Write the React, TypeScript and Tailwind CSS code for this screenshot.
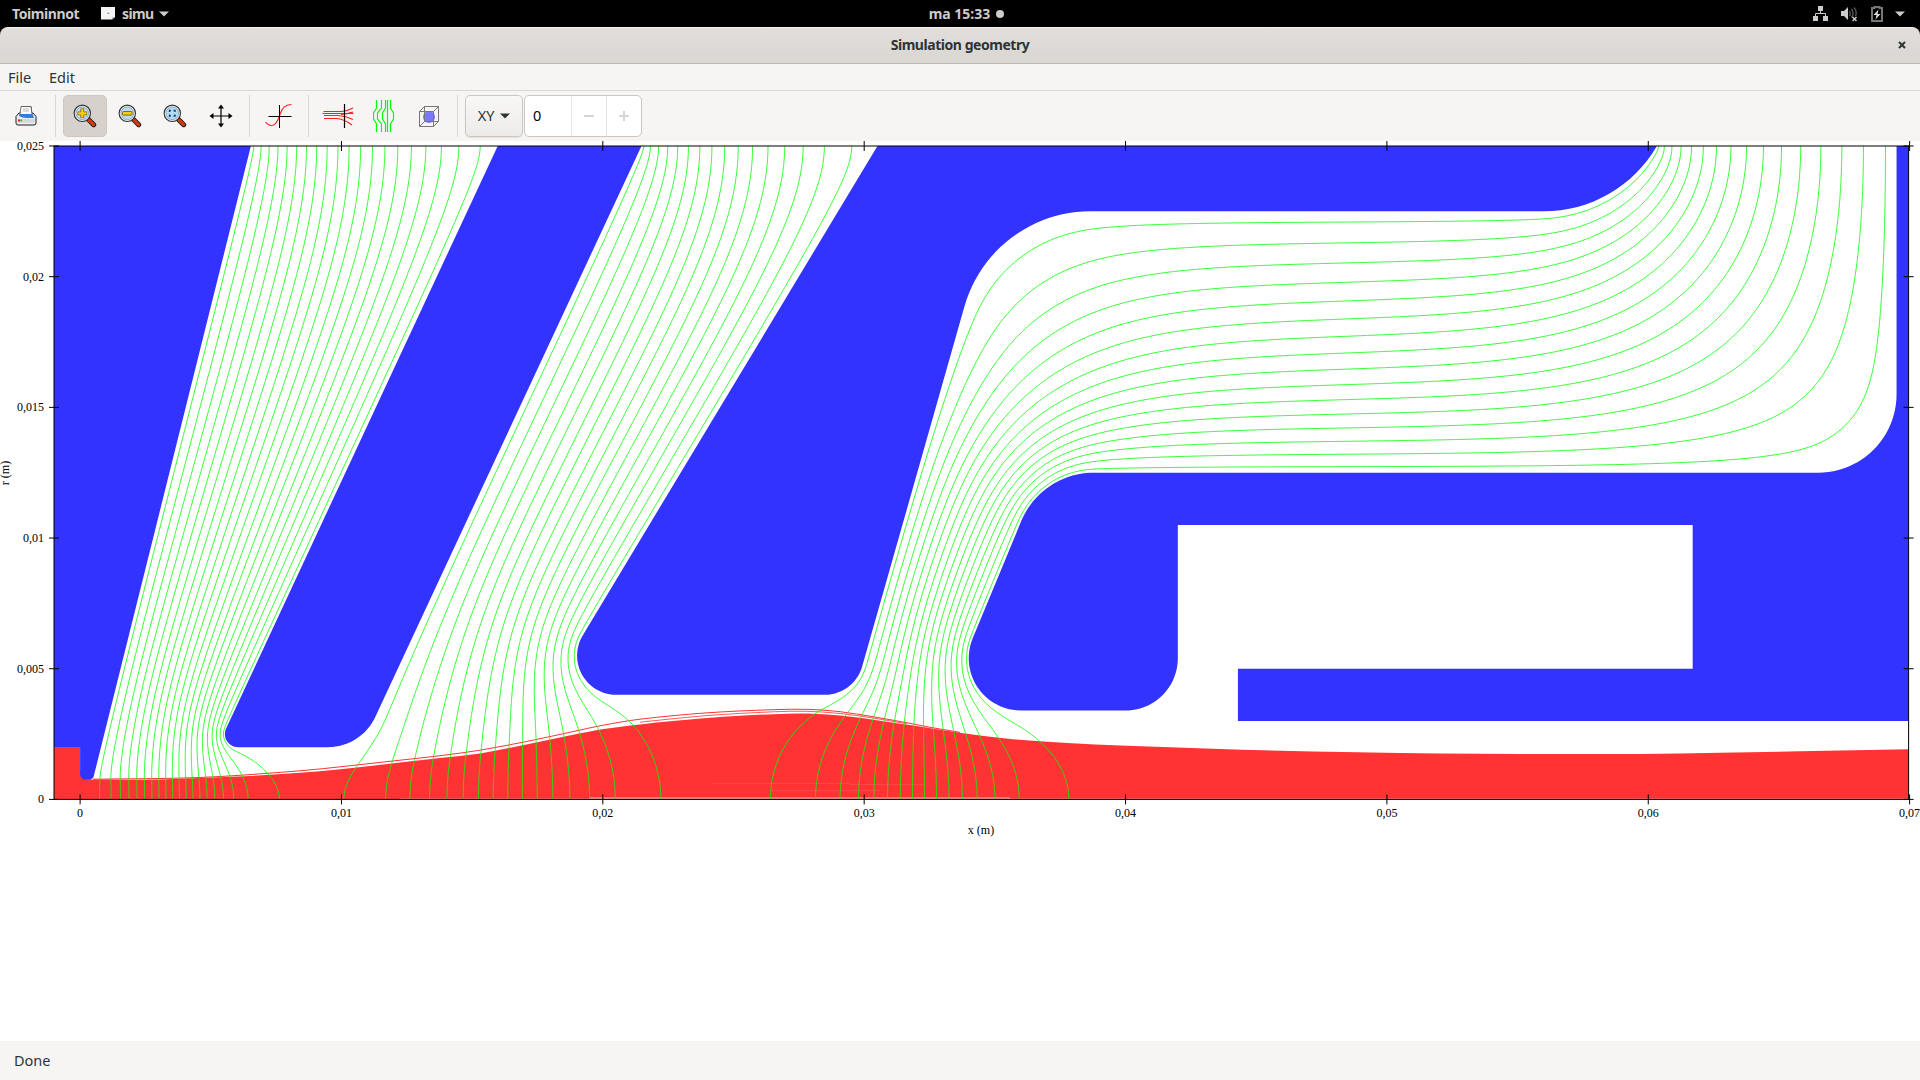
import React from "react";

type Vertex = [number, number, number?];
type Point = [number, number];

/* Plot scale: millimetres to canvas pixels. */
const X0 = 80.1;
const Y0 = 799.4;
const S = 26.136;
const px = (x: number) => X0 + x * S;
const py = (r: number) => Y0 - r * S;

/* Electrode outlines in mm: x, r and an optional fillet radius. */
const ELECTRODES: Vertex[][] = [
  [[-3, 30], [-3, 2], [0, 2], [0, 0.75, 0.22], [0.488, 0.75, 0.2], [7.78, 30]],
  [[18.31, 30], [5.255, 2, 0.5], [10.755, 2, 2], [23.81, 30]],
  [[33.52, 30], [17.86, 4, 1.5], [29.616, 4, 1.5], [34.87, 22.5, 5], [61, 22.5, 5], [61, 30]],
  [[36.776, 12.5, 3], [69.5, 12.5, 3], [69.5, 30], [71, 30], [71, 3], [44.3, 3], [44.3, 5], [61.7, 5], [61.7, 10.5], [42, 10.5], [42, 3.4, 2], [33.007, 3.4, 2]],
];
const PLASMA: Vertex[] = [[-3, 2.2], [-3, -1], [0.15, -1], [0.15, 0.85], [0, 0.85], [0, 2.2]];
/* Potentials of the electrodes and the plasma, in contour steps. */
const VOLTS = [0, 20, 4, 20, 0];

/* Beam envelope in canvas pixels. */
const BEAM: Point[] = [
  [80, 779.8], [93, 779.6], [130, 779.8], [160, 779.4], [200, 778], [250, 776], [300, 772.8], [345, 768.8], [400, 762.6], [440, 757.9], [480, 753.4],
  [530, 743.8], [573, 734.8], [602, 729.2], [640, 724.4], [673, 721], [723, 716.8], [773, 714.2], [807, 713.6], [840, 715.5],
  [867, 718.7], [900, 723.8], [923, 727], [947, 730.8], [980, 735.6], [1013, 739.2], [1063, 742.7], [1127, 745.7], [1213, 748.7],
  [1313, 751.5], [1400, 753], [1440, 753.5], [1520, 754], [1640, 753.9], [1720, 752.8], [1800, 751.3], [1909, 749.3],
];
const HALO: Point[] = [
  [93, 779.2], [200, 777.5], [300, 770.8], [345, 766.3], [400, 760.2], [440, 755.7], [480, 750.2], [530, 740.8], [573, 731.6], [602, 725.4], [640, 719.2],
  [706, 712.9], [773, 709.7], [810, 709.4], [840, 711.7], [873, 716.7], [907, 722.8], [930, 727.3], [960, 732.4],
];
const HALO_INNER: Point[] = [
  [640, 722.2], [706, 715.6], [773, 711.8], [807, 711.3], [840, 713.5], [873, 718], [907, 723.8],
];

const line = (pts: Point[]) => "M" + pts.map(([x, y]) => `${x.toFixed(2)} ${y.toFixed(2)}`).join("L");

function smooth(pts: Point[]): string {
  let s = `M${pts[0][0]} ${pts[0][1]}`;
  for (let i = 0; i < pts.length - 1; i++) {
    const a = pts[Math.max(0, i - 1)], b = pts[i], c = pts[i + 1], d = pts[Math.min(pts.length - 1, i + 2)];
    const h = (c[0] - b[0]) / 3;
    const m0 = (c[1] - a[1]) / (c[0] - a[0]), m1 = (d[1] - b[1]) / (d[0] - b[0]);
    s += `C${(b[0] + h).toFixed(1)} ${(b[1] + m0 * h).toFixed(2)} ${(c[0] - h).toFixed(1)} ${(c[1] - m1 * h).toFixed(2)} ${c[0]} ${c[1]}`;
  }
  return s;
}

/* Polygon with filleted corners, flattened to points. */
function outline(pts: Vertex[]): Point[] {
  const out: Point[] = [];
  pts.forEach((p, i) => {
    const R = p[2];
    if (!R) {
      out.push([p[0], p[1]]);
      return;
    }
    const a = pts[(i + pts.length - 1) % pts.length], b = pts[(i + 1) % pts.length];
    const la = Math.hypot(a[0] - p[0], a[1] - p[1]), lb = Math.hypot(b[0] - p[0], b[1] - p[1]);
    const u = [(a[0] - p[0]) / la, (a[1] - p[1]) / la], v = [(b[0] - p[0]) / lb, (b[1] - p[1]) / lb];
    const half = Math.acos(u[0] * v[0] + u[1] * v[1]) / 2;
    const t = R / Math.tan(half), d = R / Math.sin(half);
    const m = Math.hypot(u[0] + v[0], u[1] + v[1]);
    const c = [p[0] + ((u[0] + v[0]) / m) * d, p[1] + ((u[1] + v[1]) / m) * d];
    const a0 = Math.atan2(p[1] + u[1] * t - c[1], p[0] + u[0] * t - c[0]);
    let da = Math.atan2(p[1] + v[1] * t - c[1], p[0] + v[0] * t - c[0]) - a0;
    if (da > Math.PI) da -= 2 * Math.PI;
    if (da < -Math.PI) da += 2 * Math.PI;
    for (let k = 0; k <= 24; k++) out.push([c[0] + R * Math.cos(a0 + (da * k) / 24), c[1] + R * Math.sin(a0 + (da * k) / 24)]);
  });
  return out;
}
const SHAPES = ELECTRODES.map(outline);

function crossings(poly: Point[], axis: 0 | 1, c: number): number[] {
  const o: number[] = [];
  for (let i = 0; i < poly.length; i++) {
    const a = poly[i], b = poly[(i + 1) % poly.length];
    if (a[axis] > c !== b[axis] > c) o.push(a[1 - axis] + ((c - a[axis]) / (b[axis] - a[axis])) * (b[1 - axis] - a[1 - axis]));
  }
  return o.sort((p, q) => p - q);
}

function beamRadius(x: number): number {
  const X = px(x);
  for (let i = 0; i < BEAM.length - 1; i++) {
    const a = BEAM[i], b = BEAM[i + 1];
    if (X <= b[0]) return (Y0 - (a[1] + ((X - a[0]) / (b[0] - a[0])) * (b[1] - a[1]))) / S;
  }
  return 2;
}
/* Space charge strength along the beam. */
const perveance = (x: number) => (x < 8 ? 0.87 : x < 13 ? 0.95 : x < 31 ? 1.15 : 0.85);

interface Field { n: number; nx: number; nr: number; u: Float32Array; solid: Uint8Array; d: Float32Array }

/* Axisymmetric Poisson solution on a grid of n cells per mm, with space charge inside the beam. */
function solve(n: number, sweeps: number, w: number, prev?: Field): Field {
  const nx = 71 * n + 1, nr = 25 * n + 1, N = nx * nr, MIN = 0.08, EPS = 1e-4;
  const u = new Float32Array(N), solid = new Uint8Array(N), d = new Float32Array(N * 4).fill(1);
  if (prev) {
    for (let j = 0; j < nr; j++) for (let i = 0; i < nx; i++) {
      const pi = Math.min(i / 2, prev.nx - 1.001), pj = Math.min(j / 2, prev.nr - 1.001);
      const a = Math.floor(pi), b = Math.floor(pj), fx = pi - a, fy = pj - b, k = b * prev.nx + a;
      u[j * nx + i] = (prev.u[k] * (1 - fx) + prev.u[k + 1] * fx) * (1 - fy) + (prev.u[k + prev.nx] * (1 - fx) + prev.u[k + prev.nx + 1] * fx) * fy;
    }
  }
  [...SHAPES, outline(PLASMA)].forEach((poly, e) => {
    const v = VOLTS[e];
    for (let j = 0; j < nr; j++) {
      const cs = crossings(poly, 1, j / n + 1e-6);
      for (let q = 0; q < cs.length; q += 2) {
        const a = (cs[q] + 1) * n, b = (cs[q + 1] + 1) * n, i0 = Math.ceil(a - EPS), i1 = Math.floor(b + EPS);
        for (let i = Math.max(0, i0); i <= Math.min(nx - 1, i1); i++) { solid[j * nx + i] = 1; u[j * nx + i] = v; }
        if (i0 > 0 && i0 < nx) d[(j * nx + i0 - 1) * 4 + 1] = Math.max(MIN, a - i0 + 1);
        if (i1 >= 0 && i1 < nx - 1) d[(j * nx + i1 + 1) * 4] = Math.max(MIN, i1 + 1 - b);
      }
    }
    for (let i = 0; i < nx; i++) {
      const cs = crossings(poly, 0, i / n - 1 + 1e-6);
      for (let q = 0; q < cs.length; q += 2) {
        const a = cs[q] * n, b = cs[q + 1] * n, j0 = Math.ceil(a - EPS), j1 = Math.floor(b + EPS);
        for (let j = Math.max(0, j0); j <= Math.min(nr - 1, j1); j++) { solid[j * nx + i] = 1; u[j * nx + i] = v; }
        if (j0 > 0 && j0 < nr) d[((j0 - 1) * nx + i) * 4 + 3] = Math.max(MIN, a - j0 + 1);
        if (j1 >= 0 && j1 < nr - 1) d[((j1 + 1) * nx + i) * 4 + 2] = Math.max(MIN, j1 + 1 - b);
      }
    }
  });
  const C = new Float32Array(N * 4), T = new Float32Array(N), rho = new Float32Array(N);
  for (let j = 0; j < nr; j++) for (let i = 0; i < nx; i++) {
    const k = j * nx + i;
    if (solid[k]) continue;
    const W = d[k * 4], E = d[k * 4 + 1], D = d[k * 4 + 2], U = d[k * 4 + 3];
    let cw = 2 / (W * (W + E)), ce = 2 / (E * (W + E)), cs = 2 / (D * (D + U)), cn = 2 / (U * (D + U));
    if (i === 0) { ce = 2; cw = 0; }
    if (i === nx - 1) { cw = 2; ce = 0; }
    if (j === 0) { cn = 4 / (U * U); cs = 0; }
    else if (j === nr - 1) { cs = 2 / (D * D); cn = 0; }
    else { cn += 1 / (j * (D + U)); cs -= 1 / (j * (D + U)); }
    const t = cw + ce + cs + cn;
    C[k * 4] = cw / t; C[k * 4 + 1] = ce / t; C[k * 4 + 2] = cs / t; C[k * 4 + 3] = cn / t; T[k] = t * n * n;
  }
  const radius = Array.from({ length: nx }, (_, i) => (i < n ? 0 : beamRadius(i / n - 1)));
  for (let s = 0; s < sweeps; s++) {
    if (s % 20 === 0) {
      for (let i = n; i < nx; i++) {
        const R = radius[i], K = perveance(i / n - 1);
        for (let j = 0; j / n < R + 0.5 / n; j++) {
          const k = j * nx + i;
          const part = Math.min(1, (R - j / n) * n + 0.5);
          if (!solid[k]) rho[k] = (part * K) / (R * R * Math.sqrt(Math.max(0.15, u[k])) * T[k]);
        }
      }
    }
    for (let j = 0; j < nr; j++) for (let i = 0; i < nx; i++) {
      const k = j * nx + i;
      if (solid[k]) continue;
      const q = k * 4;
      let v = -rho[k];
      if (i > 0) v += C[q] * u[k - 1];
      if (i < nx - 1) v += C[q + 1] * u[k + 1];
      if (j > 0) v += C[q + 2] * u[k - nx];
      if (j < nr - 1) v += C[q + 3] * u[k + nx];
      u[k] += w * (v - u[k]);
    }
  }
  return { n, nx, nr, u, solid, d };
}

/* Equipotential lines at half-integer levels. */
function contours(f: Field): string {
  const { n, nx, nr, solid, d } = f;
  const u = Float32Array.from(f.u);
  for (let j = 0; j < nr; j++) for (let i = 0; i < nx; i++) {
    const k = j * nx + i;
    if (!solid[k]) continue;
    let sum = 0, cnt = 0;
    const nb: [number, number, number, boolean][] = [[-1, 0, 1, i > 1], [1, 0, 0, i < nx - 2], [0, -1, 3, j > 1], [0, 1, 2, j < nr - 2]];
    nb.forEach(([dx, dy, side, ok]) => {
      if (!ok) return;
      const a = k + dx + dy * nx, b = a + dx + dy * nx;
      if (solid[a] || solid[b]) return;
      const th = d[a * 4 + side];
      sum += f.u[k] + ((f.u[k] - f.u[b]) * (1 - th)) / (1 + th);
      cnt++;
    });
    if (cnt) u[k] = sum / cnt;
  }
  const out: string[] = [];
  for (let j = 0; j < nr - 1; j++) for (let i = 0; i < nx - 1; i++) {
    const k = j * nx + i;
    if (solid[k] && solid[k + 1] && solid[k + nx] && solid[k + nx + 1]) continue;
    const v = [u[k], u[k + 1], u[k + nx + 1], u[k + nx]];
    const lo = Math.min(...v), hi = Math.max(...v);
    for (let L = Math.ceil(lo - 0.5) + 0.5; L < hi; L++) {
      const pts: string[] = [];
      for (let e = 0; e < 4; e++) {
        const a = v[e], b = v[(e + 1) % 4];
        if (a > L === b > L) continue;
        const t = (L - a) / (b - a);
        const gx = e === 0 ? t : e === 1 ? 1 : e === 2 ? 1 - t : 0;
        const gy = e === 0 ? 0 : e === 1 ? t : e === 2 ? 1 : 1 - t;
        pts.push(px((i + gx) / n - 1).toFixed(2) + " " + py((j + gy) / n).toFixed(2));
      }
      if (pts.length >= 2) out.push("M" + pts[0] + "L" + pts[1]);
    }
  }
  return out.join("");
}

const EQUIPOTENTIALS = contours(solve(12, 160, 1.95, solve(6, 300, 1.94, solve(3, 300, 1.9))));

const XTICKS = ["0", "0,01", "0,02", "0,03", "0,04", "0,05", "0,06", "0,07"];
const YTICKS = ["0", "0,005", "0,01", "0,015", "0,02", "0,025"];

function Plot() {
  return (
    <svg className="block h-[900px] w-[1920px] font-['Liberation_Serif',serif] text-[12px]" viewBox="0 141 1920 900">
      <defs>
        <clipPath id="area"><rect x="54" y="146" width="1854.6" height="653.4" /></clipPath>
      </defs>
      <g clipPath="url(#area)">
        <rect x="54" y="747.1" width="26.1" height="53" fill="#ff3333" />
        <rect x="79" y="770" width="7" height="30" fill="#ff3333" />
        <path d={smooth(BEAM) + "L1909 800L80 800Z"} fill="#ff3333" />
        <path d={smooth(HALO)} fill="none" stroke="#ff3333" />
        <path d={smooth(HALO_INNER)} fill="none" stroke="#ff3333" strokeOpacity="0.8" />
        <path d="M590 798.1H1010" stroke="#fff" strokeOpacity="0.75" />
        <path d="M400 798.5H590M1010 798.5H1909" stroke="#fff" strokeOpacity="0.2" />
        <path d="M712 783.5H850M850 784.5H925M770 790.5H880" stroke="#fff" strokeOpacity="0.1" />
        {SHAPES.map((s, i) => <path key={i} fill="#3333ff" d={line(s.map(([x, r]) => [px(x), py(r)] as Point)) + "Z"} />)}
        <path d={EQUIPOTENTIALS} fill="none" stroke="#00ff00" strokeOpacity="0.8" />
      </g>
      <rect x="54" y="146" width="1854.6" height="653.4" fill="none" stroke="#000" />
      {XTICKS.map((t, i) => (
        <g key={t}>
          <path d={`M${px(i * 10)} 141v10M${px(i * 10)} 794.4v10`} stroke="#000" />
          <text x={px(i * 10)} y="817" textAnchor="middle">{t}</text>
        </g>
      ))}
      {YTICKS.map((t, i) => (
        <g key={t}>
          <path d={`M49 ${py(i * 5)}h10M1903.6 ${py(i * 5)}h10`} stroke="#000" />
          <text x="44" y={py(i * 5) + 4} textAnchor="end">{t}</text>
        </g>
      ))}
      <text x="981" y="834" textAnchor="middle">x (m)</text>
      <text transform="translate(9 473) rotate(-90)" textAnchor="middle">r (m)</text>
    </svg>
  );
}

function Sep() {
  return <div className="mr-[7px] ml-[6px] h-[42px] w-px shrink-0 bg-[#d9d5d1]" />;
}
function Tool({ active, children }: { active?: boolean; children: React.ReactNode }) {
  return (
    <div className={active ? "mr-px flex h-[42px] w-[44px] shrink-0 items-center justify-center rounded-[5px] border border-[#cdc7c2] bg-[#d6d1cd]" : "mr-px flex h-[42px] w-[44px] shrink-0 items-center justify-center"}>
      {children}
    </div>
  );
}
function Magnifier({ children }: { children: React.ReactNode }) {
  return (
    <svg width="24" height="24" viewBox="0 0 24 24">
      <path d="M15.5 15.5l5.2 5.2" stroke="#1a1a1a" strokeWidth="5" strokeLinecap="round" />
      <path d="M16 16l4.6 4.6" stroke="#d43a12" strokeWidth="3.2" strokeLinecap="round" />
      <circle cx="9.3" cy="9.3" r="8.2" fill="#e8ecee" stroke="#2e3436" strokeWidth="1.1" />
      <circle cx="9.3" cy="9.3" r="6.3" fill="#b5dcf5" stroke="#8f9aa0" strokeWidth="0.8" />
      {children}
    </svg>
  );
}

function TopBar() {
  return (
    <div className="grid h-[27px] shrink-0 grid-cols-[1fr_auto_1fr] items-center bg-black text-[14px] font-bold text-[#cccccc]">
      <div className="flex items-center pl-[12px]">
        <span className="w-[89px] tracking-[-0.4px]">Toiminnot</span>
        <svg width="14" height="13" viewBox="0 0 14 13"><path d="M0 0h14v10l-3 2.5H0z" fill="#f4f4f2" /><path d="M14 10l-3 2.5V10z" fill="#bbb" /><path d="M6 6.5h2.5M7 5v2" stroke="#aaa" /></svg>
        <span className="ml-[7px] w-[37px] tracking-[-0.6px]">simu</span>
        <svg width="10" height="6" viewBox="0 0 10 6"><path d="M0 .5h10L5 5.5z" fill="#ccc" /></svg>
      </div>
      <div className="flex items-center pl-[13px]"><span>ma 15:33</span><span className="ml-[6px] size-[8px] rounded-full bg-[#ccc]" /></div>
      <div className="flex items-center justify-end pr-[15px]">
        <svg width="15" height="15" viewBox="0 0 15 15" fill="#ccc"><path d="M5 0h5v5H5zM0 10h5v5H0zM10 10h5v5h-5z" /><path d="M7.5 5v2.5M2.5 10V7.5h10V10" fill="none" stroke="#ccc" /></svg>
        <svg className="ml-[13px]" width="17" height="16" viewBox="0 0 17 16"><path d="M0 5h3l4-4v13l-4-4H0z" fill="#ccc" /><path d="M8.5 5q1.5 2.5 0 5M10.5 3q3 4.5 0 8.5M13 1.5q3.5 4.5 1.5 8.5" stroke="#555" strokeWidth="1.4" fill="none" /><path d="M11.5 11l4 4M15.5 11l-4 4" stroke="#ccc" strokeWidth="1.5" /></svg>
        <svg className="ml-[13px]" width="12" height="16" viewBox="0 0 12 16"><path d="M3.5 2V1h5v1H11v13H1V2z" fill="none" stroke="#777" strokeWidth="2" /><path d="M7.5 3.5L2.5 9h3l-1 4.5L9.5 8h-3z" fill="#ddd" /></svg>
        <svg className="ml-[12px]" width="10" height="6" viewBox="0 0 10 6"><path d="M0 .5h10L5 5.5z" fill="#ccc" /></svg>
      </div>
    </div>
  );
}

export default function App() {
  return (
    <div className="flex h-[1080px] w-[1920px] flex-col overflow-hidden bg-black font-['Noto_Sans','Open_Sans',sans-serif] text-[#2e3436]">
      <TopBar />
      <div className="grid h-[37px] shrink-0 grid-cols-[1fr_auto_1fr] items-center rounded-t-[8px] border-t border-b border-t-[#f3f1f0] border-b-[#bfb8b1] bg-linear-to-b from-[#e1dedb] to-[#dad6d2] pb-[2px]">
        <span />
        <span className="text-[14px] font-bold tracking-[-0.45px]">Simulation geometry</span>
        <svg className="mr-[14px] justify-self-end" width="8" height="8" viewBox="0 0 8 8"><path d="M1 1l6 6M7 1L1 7" stroke="#2e3436" strokeWidth="2" /></svg>
      </div>
      <div className="flex h-[27px] shrink-0 items-center border-b border-[#dbd7d3] bg-[#f6f5f4] pt-[2px] text-[14.5px]">
        <span className="ml-[8px] w-[41px]">File</span>
        <span>Edit</span>
      </div>
      <div className="flex h-[50px] shrink-0 items-start bg-[#f6f5f4] pt-[4px] pl-[4px]">
        <Tool>
          <svg width="22" height="20" viewBox="0 0 22 20">
            <path d="M5.5 9.5L7 .5h9l1 9z" fill="#fff" stroke="#333" />
            <path d="M8.5 3h6M8.5 5h6" stroke="#bbb" />
            <path d="M1 10.5L4 7h14l3 3.5V17q0 2-2 2H3q-2 0-2-2z" fill="#e9ebee" stroke="#222" />
            <path d="M6 .5h10l1 8H5z" fill="#fafafa" stroke="#555" strokeWidth="0.8" />
            <path d="M8 3h6M8 5h6" stroke="#bbb" />
            <path d="M4.5 8h13l1.5 4H12q-5 0-8-2z" fill="#2f7de0" />
            <path d="M2.5 13h17v3.5h-17z" fill="#d5d8dc" />
            <path d="M3 14.5h2" stroke="#d22" strokeWidth="2" /><path d="M5.5 14.5h1.5" stroke="#3a3" strokeWidth="2" />
          </svg>
        </Tool>
        <Sep />
        <Tool active><Magnifier><path d="M9.3 4.5v9.6M4.5 9.3h9.6" stroke="#8a6a00" strokeWidth="3.8" /><path d="M9.3 5.2v8.2M5.2 9.3h8.2" stroke="#fcd116" strokeWidth="2.2" /></Magnifier></Tool>
        <Tool><Magnifier><rect x="4.5" y="7.5" width="9.6" height="3.6" rx="1" fill="#fcc916" stroke="#8a6a00" /></Magnifier></Tool>
        <Tool><Magnifier><path d="M6.500 8V6.500H8M10.500 6.500H12V8M12 10.500V12h-1.500M8 12H6.500v-1.500" stroke="#12408a" strokeWidth="1.4" fill="none" /></Magnifier></Tool>
        <Tool>
          <svg width="25" height="24" viewBox="-1 0 25 24"><path d="M12 3v18M3 12h18" stroke="#000" strokeWidth="1.2" /><path d="M12 .5l3 4H9zM12 23.5l3-4H9zM.5 12l4-3v6zM23.5 12l-4-3v6z" /></svg>
        </Tool>
        <Sep />
        <Tool>
          <svg width="28" height="26" viewBox="0 0 28 26"><path d="M.5 19q3 4 6.500 3.500c4 0 6-5 8-11C17 4.500 20 2 26.500 1.500" fill="none" stroke="#ff2020" strokeWidth="1.1" /><path d="M14.500 2v23M3.500 13.500h23" stroke="#000" /></svg>
        </Tool>
        <Sep />
        <Tool>
          <svg width="32" height="26" viewBox="0 0 32 26"><path d="M1.500 8.500h18q6-.5 11.500-3.500M.5 10.500h31M2 12.500h14q8 .5 15 4M2 15.500h13q8 1 15 6.500M19 11.500q6-.5 12-2.500" fill="none" stroke="#ff2020" strokeWidth="1.2" /><path d="M22.500 1v24" stroke="#000" strokeWidth="1.2" /></svg>
        </Tool>
        <Tool>
          <svg className="ml-[2px]" width="22" height="32" viewBox="0 0 22 32"><path d="M3.500 0v8l-3 5v6l3 5v8M8.500 0v8l-4 5v6l4 5v8M12.500 0v8l-3 5v6l3 5v8M14.500 0v32M17.500 0v8l3 5v6l-3 5v8" fill="none" stroke="#00ff00" strokeWidth="1.2" /></svg>
        </Tool>
        <Tool>
          <svg className="ml-[2px]" width="20" height="21" viewBox="0 0 20 21"><circle cx="10" cy="11" r="6" fill="#7a7af8" /><path d="M.5 5.500h14v15H.5zM5.500.5h14v15M.5 5.500l5-5M14.500 5.500l5-5M14.500 20.500l5-5M5.500.5v15h14M.5 20.500l5-5" fill="none" stroke="#777" /></svg>
        </Tool>
        <Sep />
        <div className="flex h-[42px] w-[58px] items-center justify-center gap-[6px] rounded-[5px] border border-[#cdc7c2] bg-linear-to-b from-[#f8f8f7] to-[#edebe9] text-[14.5px] shadow-[0_1px_1px_rgba(0,0,0,0.08)]">
          <span>XY</span>
          <svg width="10" height="6" viewBox="0 0 10 6"><path d="M0 .5h10L5 5.5z" fill="#2e3436" /></svg>
        </div>
        <div className="ml-px grid h-[42px] w-[118px] grid-cols-[46px_35px_1fr] rounded-[5px] border border-[#cdc7c2] bg-white text-[14.5px] text-black">
          <span className="flex items-center pl-[8px]">0</span>
          <span className="flex items-center justify-center border-l border-[#e8e6e4]"><span className="h-[2px] w-[10px] bg-[#d5d5d5]" /></span>
          <span className="flex items-center justify-center border-l border-[#e8e6e4]"><svg width="10" height="10" viewBox="0 0 10 10"><path d="M0 5h10M5 0v10" stroke="#d5d5d5" strokeWidth="2" /></svg></span>
        </div>
      </div>
      <div className="h-[900px] shrink-0 bg-white"><Plot /></div>
      <div className="flex flex-1 items-center bg-[#f6f5f4] pl-[14px] text-[14.5px]">Done</div>
    </div>
  );
}
